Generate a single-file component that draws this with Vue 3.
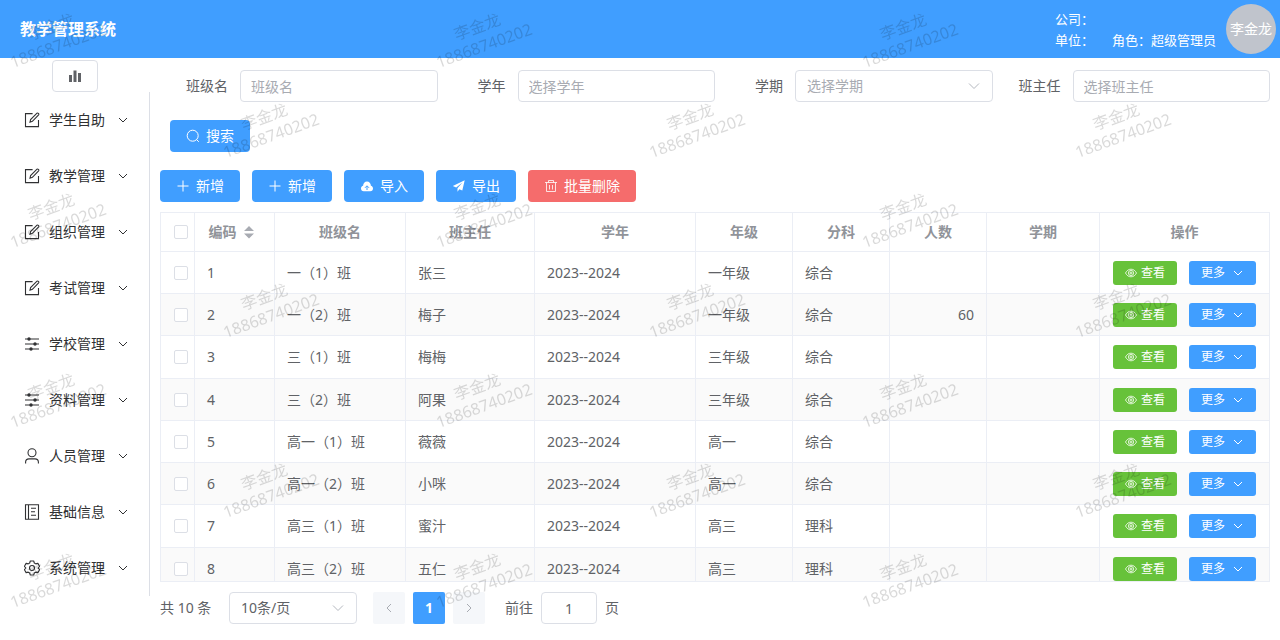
<script setup>
import { ref } from 'vue'

const menu = [
  { label: '学生自助', icon: 'edit' },
  { label: '教学管理', icon: 'edit' },
  { label: '组织管理', icon: 'edit' },
  { label: '考试管理', icon: 'edit' },
  { label: '学校管理', icon: 'operation' },
  { label: '资料管理', icon: 'operation' },
  { label: '人员管理', icon: 'user' },
  { label: '基础信息', icon: 'notebook' },
  { label: '系统管理', icon: 'setting' }
]

const rows = ref([
  { id: 1, name: '一（1）班', teacher: '张三', year: '2023--2024', grade: '一年级', subject: '综合', count: '', term: '', checked: false },
  { id: 2, name: '一（2）班', teacher: '梅子', year: '2023--2024', grade: '一年级', subject: '综合', count: '60', term: '', checked: false },
  { id: 3, name: '三（1）班', teacher: '梅梅', year: '2023--2024', grade: '三年级', subject: '综合', count: '', term: '', checked: false },
  { id: 4, name: '三（2）班', teacher: '阿果', year: '2023--2024', grade: '三年级', subject: '综合', count: '', term: '', checked: false },
  { id: 5, name: '高一（1）班', teacher: '薇薇', year: '2023--2024', grade: '高一', subject: '综合', count: '', term: '', checked: false },
  { id: 6, name: '高一（2）班', teacher: '小咪', year: '2023--2024', grade: '高一', subject: '综合', count: '', term: '', checked: false },
  { id: 7, name: '高三（1）班', teacher: '蜜汁', year: '2023--2024', grade: '高三', subject: '理科', count: '', term: '', checked: false },
  { id: 8, name: '高三（2）班', teacher: '五仁', year: '2023--2024', grade: '高三', subject: '理科', count: '', term: '', checked: false }
])

const query = ref({ name: '', year: '', term: '', teacher: '' })
const pageInput = ref('1')
</script>

<template>
  <div class="page">
    <header class="topbar">
      <h1>教学管理系统</h1>
      <div class="account">
        <div class="info">
          <span>公司：</span>
          <span></span>
          <span>单位：</span>
          <span>角色：超级管理员</span>
        </div>
        <div class="avatar">李金龙</div>
      </div>
    </header>

    <div class="body">
      <aside class="side">
        <button class="collapse" type="button" aria-label="折叠菜单">
          <svg viewBox="0 0 14 14" width="14" height="14" fill="#606266">
            <rect x="1" y="6" width="3" height="7" />
            <rect x="5.5" y="1.5" width="3" height="11.5" />
            <rect x="10" y="4" width="3" height="9" />
          </svg>
        </button>
        <nav>
          <button v-for="item in menu" :key="item.label" class="menu-item" type="button">
            <svg class="menu-icon" viewBox="0 0 16 16" width="16" height="16" fill="none" stroke="#303133" stroke-width="1.1">
              <template v-if="item.icon === 'edit'">
                <path d="M8.6 1.6H1.5v13h13V8" />
                <path d="M6 10.2l.6-2.7L13 1.2c.9-.7 2.3.6 1.6 1.6L8.4 9.3z" />
              </template>
              <template v-else-if="item.icon === 'operation'">
                <path d="M1 3h14M1 8h14M1 13h14" stroke-width="1.2" />
                <g fill="#303133" stroke="none">
                  <circle cx="5" cy="3" r="1.7" />
                  <circle cx="11" cy="8" r="1.7" />
                  <circle cx="7" cy="13" r="1.7" />
                </g>
              </template>
              <template v-else-if="item.icon === 'user'">
                <circle cx="8" cy="4.8" r="4" />
                <path d="M1.6 15.4v-1.2c0-2 1.4-3.3 3.4-3.3h6c2 0 3.4 1.3 3.4 3.3v1.2" />
              </template>
              <template v-else-if="item.icon === 'notebook'">
                <path d="M1.5.8h13v14.4h-13zM4.500.8v14.4M7 4.2h5M7 7.700h4M7 11.2h5" />
              </template>
              <template v-else>
                <path d="M6.3 1h3.4l.6 2 1.5.9 2.1-.5 1.7 2.9-1.5 1.7 1.5 1.7-1.7 2.9-2.1-.5-1.5.9-.6 2H6.3l-.6-2-1.5-.9-2.1.5L.4 9.7 1.9 8 .4 6.3l1.7-2.9 2.1.5L5.7 3z" stroke-linejoin="round" />
                <circle cx="8" cy="8" r="2.5" />
              </template>
            </svg>
            <span>{{ item.label }}</span>
            <svg class="menu-arrow" viewBox="0 0 12 12" width="12" height="12" fill="none" stroke="#303133">
              <path d="M2 4l4 4 4-4" />
            </svg>
          </button>
        </nav>
      </aside>

      <main class="main">
        <form class="filters" @submit.prevent>
          <div class="field">
            <label for="q-name">班级名</label>
            <input id="q-name" v-model="query.name" type="text" placeholder="班级名">
          </div>
          <div class="field">
            <label for="q-year">学年</label>
            <input id="q-year" v-model="query.year" type="text" placeholder="选择学年">
          </div>
          <div class="field">
            <label for="q-term">学期</label>
            <div class="select">
              <select id="q-term" v-model="query.term" class="empty">
                <option value="">选择学期</option>
              </select>
              <svg viewBox="0 0 14 14" width="14" height="14" fill="none" stroke="#b4b8bf"><path d="M2 4.500l5 5 5-5" /></svg>
            </div>
          </div>
          <div class="field">
            <label for="q-teacher">班主任</label>
            <input id="q-teacher" v-model="query.teacher" type="text" placeholder="选择班主任">
          </div>
          <div class="search">
            <button class="btn" type="submit">
              <svg viewBox="0 0 14 14" width="14" height="14" fill="none" stroke="#fff"><circle cx="6.700" cy="6.700" r="5.500" /><path d="M10.600 10.600l2.200 2.200" /></svg>
              搜索
            </button>
          </div>
        </form>

        <div class="toolbar">
          <button v-for="n in 2" :key="n" class="btn" type="button">
            <svg viewBox="0 0 14 14" width="14" height="14" fill="none" stroke="#fff"><path d="M7 1.500v11M1.500 7h11" /></svg>
            新增
          </button>
          <button class="btn" type="button">
            <svg viewBox="0 0 14 14" width="14" height="14">
              <path d="M3.700 12.200C2 12.200 1 11 1 9.500c0-1.400.900-2.400 2.100-2.700C3.200 4.300 4.800 2.500 7 2.500s3.800 1.800 3.900 4.300c1.200.300 2.100 1.300 2.100 2.700 0 1.500-1 2.700-2.700 2.700z" fill="#fff" />
              <path d="M7 11V7.200M5 8.800l2-2 2 2" fill="none" stroke="#409eff" />
            </svg>
            导入
          </button>
          <button class="btn" type="button">
            <svg viewBox="0 0 14 14" width="14" height="14" fill="#fff"><path d="M12.700 1.300L.8 7.100l3.400 1.400 6.200-5-4.900 5.700v3.600l1.800-2.500 3 1.300z" /></svg>
            导出
          </button>
          <button class="btn danger" type="button">
            <svg viewBox="0 0 14 14" width="14" height="14" fill="none" stroke="#fff" stroke-width=".8"><path d="M1 3.500h12M4.500 3.500v-2h5v2M2.500 3.500v9h9v-9M5.500 6v4.500M8.500 6v4.500" /></svg>
            批量删除
          </button>
        </div>

        <div class="table-wrap">
          <table>
            <colgroup>
              <col class="c-check"><col class="c-id"><col class="c-name"><col class="c-teacher"><col class="c-year">
              <col class="c-short"><col class="c-short"><col class="c-short"><col class="c-term"><col class="c-action">
            </colgroup>
            <thead>
              <tr>
                <th><input type="checkbox" aria-label="全选"></th>
                <th>
                  <span class="sortable">编码
                    <svg viewBox="0 0 24 14" width="24" height="14" fill="#a8abb2"><path d="M7 6l5-5 5 5zM7 8.500h10l-5 5z" /></svg>
                  </span>
                </th>
                <th>班级名</th>
                <th>班主任</th>
                <th>学年</th>
                <th>年级</th>
                <th>分科</th>
                <th>人数</th>
                <th>学期</th>
                <th>操作</th>
              </tr>
            </thead>
            <tbody>
              <tr v-for="row in rows" :key="row.id">
                <td><input v-model="row.checked" type="checkbox" :aria-label="row.name"></td>
                <td>{{ row.id }}</td>
                <td>{{ row.name }}</td>
                <td>{{ row.teacher }}</td>
                <td>{{ row.year }}</td>
                <td>{{ row.grade }}</td>
                <td>{{ row.subject }}</td>
                <td class="num">{{ row.count }}</td>
                <td>{{ row.term }}</td>
                <td>
                  <div class="actions">
                    <button class="btn mini success" type="button">
                      <svg viewBox="0 0 12 12" width="12" height="12" fill="none" stroke="#fff" stroke-width=".8">
                        <path d="M.5 6C1.800 3.500 3.700 2.200 6 2.200S10.200 3.500 11.500 6C10.200 8.500 8.300 9.800 6 9.800S1.800 8.500.5 6z" />
                        <circle cx="6" cy="6" r="2.600" />
                        <circle cx="6" cy="6" r="1" />
                      </svg>
                      查看
                    </button>
                    <button class="btn mini more" type="button">
                      更多
                      <svg viewBox="0 0 12 12" width="12" height="12" fill="none" stroke="#fff"><path d="M2 4l4 4 4-4" /></svg>
                    </button>
                  </div>
                </td>
              </tr>
            </tbody>
          </table>
        </div>

        <footer class="pager">
          <span class="total">共 10 条</span>
          <div class="select size">
            <select aria-label="每页条数">
              <option>10条/页</option>
            </select>
            <svg viewBox="0 0 14 14" width="14" height="14" fill="none" stroke="#b4b8bf"><path d="M2 4.500l5 5 5-5" /></svg>
          </div>
          <div class="pages">
            <button type="button" disabled aria-label="上一页">
              <svg viewBox="0 0 12 12" width="12" height="12" fill="none" stroke="#a8abb2"><path d="M8 2L4 6l4 4" /></svg>
            </button>
            <button type="button" class="current">1</button>
            <button type="button" disabled aria-label="下一页">
              <svg viewBox="0 0 12 12" width="12" height="12" fill="none" stroke="#a8abb2"><path d="M4 2l4 4-4 4" /></svg>
            </button>
          </div>
          <label class="jump">前往 <input v-model="pageInput" type="text"> 页</label>
        </footer>
      </main>
    </div>

    <svg class="watermark" width="100%" height="100%" aria-hidden="true">
      <defs>
        <pattern id="mark" width="426" height="180" patternUnits="userSpaceOnUse">
          <g v-for="p in [[60, 51], [273, 141]]" :key="p[0]" :transform="`translate(${p[0]} ${p[1]}) rotate(-20)`" text-anchor="middle">
            <text y="-20">李金龙</text>
            <text>18868740202</text>
          </g>
        </pattern>
      </defs>
      <rect width="100%" height="100%" fill="url(#mark)" />
    </svg>
  </div>
</template>

<style>
body {
  margin: 0;
  background: #fff;
}
</style>

<style scoped>
.page {
  position: relative;
  display: flex;
  flex-direction: column;
  height: 100vh;
  overflow: hidden;
  color: #606266;
  font: 14px/20px "Noto Sans", "Noto Sans CJK SC", sans-serif;
}
.page * {
  box-sizing: border-box;
}
button,
input,
select {
  margin: 0;
  font: inherit;
  color: inherit;
}
svg {
  display: block;
  flex: none;
}

.topbar {
  display: flex;
  align-items: center;
  justify-content: space-between;
  height: 58px;
  padding: 0 4px 0 20px;
  background: #409eff;
  color: #fff;
}
h1 {
  margin: 0;
  font-size: 16px;
  line-height: 24px;
}
.account {
  display: flex;
  align-items: center;
  gap: 10px;
}
.info {
  display: grid;
  grid-template-columns: auto auto;
  column-gap: 18px;
  padding-top: 2px;
  font-size: 13px;
  line-height: 21px;
}
.avatar {
  width: 50px;
  height: 50px;
  border-radius: 50%;
  background: #c0c4cc;
  line-height: 50px;
  text-align: center;
}

.body {
  display: flex;
  flex: 1;
  min-height: 0;
}
.side {
  flex: none;
  width: 150px;
  padding-top: 2px;
}
.collapse {
  display: flex;
  align-items: center;
  justify-content: center;
  width: 46px;
  height: 32px;
  margin: 0 auto;
  border: 1px solid #dcdfe6;
  border-radius: 4px;
  background: #fff;
}
nav {
  border-right: 1px solid #dcdfe6;
}
.menu-item {
  display: flex;
  align-items: center;
  width: 100%;
  height: 56px;
  padding: 0 20px 0 24px;
  border: 0;
  background: none;
  color: #303133;
}
.menu-icon {
  margin-right: 9px;
}
.menu-arrow {
  margin-left: auto;
}

.main {
  display: flex;
  flex: 1;
  flex-direction: column;
  min-width: 0;
  padding: 12px 10px 16px;
}
.filters {
  display: grid;
  grid-template-columns: repeat(4, 1fr);
  row-gap: 18px;
}
.field {
  display: flex;
  align-items: center;
  min-width: 0;
}
.field > label {
  flex: none;
  width: 80px;
  padding-right: 12px;
  text-align: right;
}
.field > input,
.field > .select {
  flex: 1;
  min-width: 0;
}
.field input,
.select select,
.jump input {
  height: 32px;
  padding: 0 10px;
  border: 1px solid #dcdfe6;
  border-radius: 4px;
  background: #fff;
  outline: none;
}
.field input::placeholder {
  color: #a8abb2;
  opacity: 1;
}
.select {
  position: relative;
}
.select select {
  display: block;
  width: 100%;
  padding-left: 11px;
  appearance: none;
}
.select .empty {
  color: #a8abb2;
}
.select svg {
  position: absolute;
  top: 9px;
  right: 12px;
  pointer-events: none;
}
.search {
  grid-column: 1 / -1;
  padding-left: 10px;
}
.btn {
  display: inline-flex;
  align-items: center;
  gap: 6px;
  height: 32px;
  padding: 0 16px;
  border: 0;
  border-radius: 4px;
  background: #409eff;
  color: #fff;
  white-space: nowrap;
}
.search .btn {
  display: flex;
}
.danger {
  background: #f56c6c;
}
.toolbar {
  display: flex;
  gap: 12px;
  margin: 18px 0 10px;
}

.table-wrap {
  flex: 1;
  min-height: 0;
  overflow: hidden;
  border: 1px solid #ebeef5;
  border-right: 0;
}
table {
  width: 100%;
  table-layout: fixed;
  border-spacing: 0;
}
.c-check { width: 34px; }
.c-id { width: 80px; }
.c-name { width: 131px; }
.c-teacher { width: 129px; }
.c-year { width: 161px; }
.c-short { width: 97px; }
.c-term { width: 113px; }
.c-action { width: 170px; }
th,
td {
  padding: 0 12px;
  border-right: 1px solid #ebeef5;
  border-bottom: 1px solid #ebeef5;
  text-align: left;
  white-space: nowrap;
}
th {
  height: 39px;
  padding: 0;
  color: #909399;
  text-align: center;
}
td {
  height: 42px;
}
tr:nth-child(4n + 3) td {
  height: 43px;
}
tbody tr:nth-child(even) {
  background: #fafafa;
}
th:first-child,
td:first-child {
  padding: 0 0 0 13px;
  text-align: left;
}
.num {
  text-align: right;
}
input[type="checkbox"] {
  display: block;
  width: 14px;
  height: 14px;
  border: 1px solid #dcdfe6;
  border-radius: 2px;
  background: #fff;
  appearance: none;
}
input[type="checkbox"]:checked {
  border-color: #409eff;
  background: #409eff;
}
.sortable {
  display: inline-flex;
  align-items: center;
}
.actions {
  display: flex;
  justify-content: center;
  gap: 12px;
}
.mini {
  gap: 4px;
  height: 24px;
  padding: 0 12px;
  border-radius: 3px;
  font-size: 12px;
}
.more {
  gap: 7px;
}
.success {
  background: #67c23a;
}

.pager {
  display: flex;
  align-items: center;
  gap: 16px;
  margin-top: 10px;
}
.total {
  min-width: 53px;
}
.size {
  width: 128px;
}
.pages {
  display: flex;
  gap: 8px;
}
.pages button {
  display: flex;
  align-items: center;
  justify-content: center;
  width: 32px;
  height: 32px;
  padding: 0;
  border: 0;
  border-radius: 2px;
  background: #f5f7fa;
}
.pages .current {
  background: #409eff;
  color: #fff;
  font-weight: 700;
}
.jump {
  display: flex;
  align-items: center;
  gap: 8px;
  margin-left: 4px;
}
.jump input {
  width: 56px;
  text-align: center;
}

.watermark {
  position: absolute;
  inset: 0;
  pointer-events: none;
  fill: rgba(0, 0, 0, 0.15);
  font-size: 16px;
}
</style>
